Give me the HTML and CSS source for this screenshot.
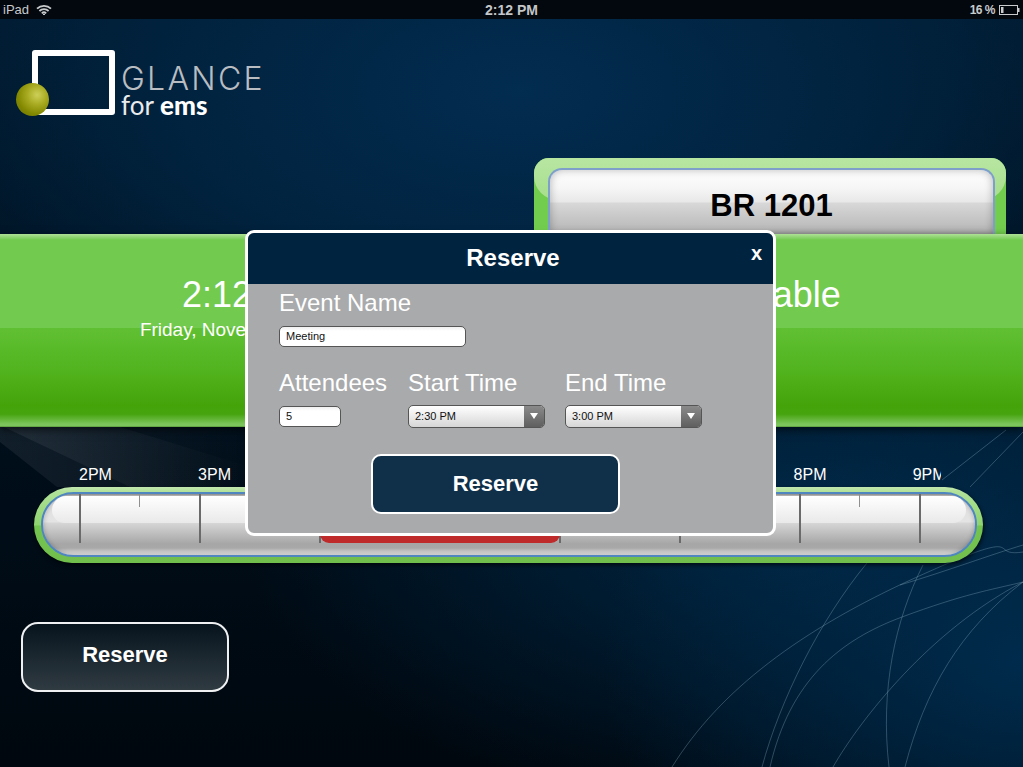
FILE: index.html
```html
<!DOCTYPE html>
<html lang="en">
<head>
<meta charset="utf-8">
<title>Glance for EMS</title>
<link rel="stylesheet" href="styles.css">
</head>
<body>
<div class="page">
  <svg class="bg-art" width="1023" height="767" viewBox="0 0 1023 767" fill="none">
    <defs>
      <linearGradient id="wedge" x1="0" y1="0" x2="1" y2="0">
        <stop offset="0" stop-color="#fff" stop-opacity=".07"/>
        <stop offset="1" stop-color="#fff" stop-opacity="0"/>
      </linearGradient>
      <linearGradient id="wedge2" x1="0" y1="0" x2="1" y2="0">
        <stop offset="0" stop-color="#fff" stop-opacity=".07"/>
        <stop offset="1" stop-color="#fff" stop-opacity="0"/>
      </linearGradient>
    </defs>
    <path d="M0 427H260V487H57L0 442Z" fill="url(#wedge)"/>
    <path d="M4 427H120L260 470V487H130Z" fill="url(#wedge2)"/>
    <g stroke="#8fb2c8" stroke-opacity=".33" stroke-width="1">
      <path d="M672 767C720 690 800 630 917 577S985 558 1023 552"/>
      <path d="M770 767C790 680 840 640 902 617S990 590 1023 582"/>
      <path d="M833 767C860 720 930 630 1023 582"/>
      <path d="M923 565C895 620 880 690 889 767"/>
      <path d="M867 563C820 620 780 700 762 767"/>
      <path d="M905 767C925 690 960 630 1023 582"/>
      <path d="M900 585C950 570 990 555 1023 545"/>
      <path d="M1006 430L942 480"/>
      <path d="M1023 432L970 487"/>
    </g>
  </svg>

  <header class="status">
    <div class="status-left">
      <span>iPad</span>
      <svg class="wifi" width="16" height="12" viewBox="0 0 16 12" fill="none" stroke="#c8cacc" stroke-width="1.8">
        <path d="M1 4.6C5 .9 11 .9 15 4.6"/>
        <path d="M3.4 7C6 4.6 10 4.6 12.6 7"/>
        <path d="M5.8 9.3C7 8.2 9 8.2 10.2 9.3"/>
        <path d="M8 9.8L8 11" stroke-width="2"/>
      </svg>
    </div>
    <div class="status-time">2:12 PM</div>
    <div class="status-right">
      <span>16 %</span>
      <svg width="21" height="10" viewBox="0 0 21 10" fill="none">
        <rect x=".5" y=".5" width="18" height="9" stroke="#c8cacc"/>
        <rect x="2" y="2" width="2.5" height="6" fill="#c8cacc"/>
        <rect x="19" y="3" width="1.5" height="4" fill="#c8cacc"/>
      </svg>
    </div>
  </header>

  <section class="brand">
    <div class="logo-mark">
      <span class="logo-frame"></span>
      <span class="logo-ball"></span>
    </div>
    <div class="logo-text">
      <div class="logo-glance">GLANCE</div>
      <div class="logo-for">for <b>ems</b></div>
    </div>
  </section>

  <div class="room-tab">
    <div class="room-inner">BR 1201</div>
  </div>

  <section class="band">
    <div class="band-col band-left">
      <div class="band-big">2:12 PM</div>
      <div class="band-small">Friday, November 9, 2012</div>
    </div>
    <div class="band-col band-right">
      <div class="band-big">Available</div>
    </div>
  </section>

  <div class="hours">
    <span>2PM</span><span>3PM</span><span>4PM</span><span>5PM</span><span>6PM</span><span>7PM</span><span>8PM</span><span>9PM</span>
  </div>

  <div class="timeline">
    <div class="timeline-inner">
      <div class="timeline-shine"></div>
      <div class="ticks">
        <i class="tick"></i><i class="tick half"></i><i class="tick"></i><i class="tick half"></i>
        <i class="tick"></i><i class="tick half"></i><i class="tick"></i><i class="tick half"></i>
        <i class="tick"></i><i class="tick half"></i><i class="tick"></i><i class="tick half"></i>
        <i class="tick"></i><i class="tick half"></i><i class="tick"></i>
      </div>
      <div class="booking"></div>
    </div>
  </div>

  <button class="btn-reserve" type="button">Reserve</button>

  <div class="modal">
    <div class="modal-head">
      <span class="modal-title">Reserve</span>
      <span class="modal-close">x</span>
    </div>
    <div class="modal-body">
      <div class="field">
        <label class="field-label">Event Name</label>
        <input class="text-input wide" type="text" value="Meeting">
      </div>
      <div class="field-row">
        <div class="field col-a">
          <label class="field-label">Attendees</label>
          <input class="text-input narrow" type="text" value="5">
        </div>
        <div class="field col-b">
          <label class="field-label">Start Time</label>
          <div class="select"><span class="select-value">2:30 PM</span><span class="select-arrow"></span></div>
        </div>
        <div class="field">
          <label class="field-label">End Time</label>
          <div class="select"><span class="select-value">3:00 PM</span><span class="select-arrow"></span></div>
        </div>
      </div>
      <button class="btn-submit" type="button">Reserve</button>
    </div>
  </div>
</div>
</body>
</html>
```
FILE: styles.css
```css
* { box-sizing: border-box; }
html, body { margin: 0; padding: 0; }
body { font-family: "Liberation Sans", Arial, sans-serif; background: #000; }

.page {
  position: relative;
  width: 1023px;
  height: 767px;
  overflow: hidden;
  color: #fff;
  background:
    radial-gradient(ellipse 420px 340px at 1023px 660px, rgba(0, 44, 78, .95), rgba(0, 44, 78, 0) 100%),
    radial-gradient(ellipse 560px 300px at 800px 520px, rgba(0, 42, 74, .9), rgba(0, 42, 74, 0) 100%),
    radial-gradient(ellipse 620px 330px at 520px 90px, #022c50 0%, #01233f 55%, rgba(1, 22, 40, 0) 100%),
    linear-gradient(180deg, #011a30 0%, #000e1a 60%, #00070e 100%);
}
.bg-art { position: absolute; left: 0; top: 0; }

.status {
  position: relative;
  display: flex;
  align-items: center;
  justify-content: space-between;
  height: 19px;
  padding: 0 3px 0 3px;
  background: #02080e;
  color: #c8cacc;
  font-size: 13px;
}
.status-left { display: flex; align-items: center; gap: 7px; }
.status-time { position: absolute; left: 0; right: 0; text-align: center; font-weight: 700; font-size: 14px; color: #c4c6c8; }
.status-right { display: flex; align-items: center; gap: 4px; font-size: 12px; font-weight: 700; letter-spacing: -.5px; }
.wifi { display: block; }

.brand {
  position: relative;
  display: flex;
  height: 139px;
  padding: 31px 0 0 16px;
}
.logo-mark { position: relative; width: 100px; height: 67px; }
.logo-frame {
  display: block;
  margin-left: 16px;
  width: 83px;
  height: 65px;
  border: 6px solid #fff;
  border-radius: 3px;
}
.logo-ball {
  position: absolute;
  left: 0;
  bottom: 1px;
  width: 33px;
  height: 33px;
  border-radius: 50%;
  background: radial-gradient(circle at 64% 36%, #cdd058 0%, #a9ac22 32%, #828800 65%, #6a7000 100%);
}
.logo-text { margin: 14px 0 0 6px; }
.logo-glance {
  font-family: Inter, Lato, sans-serif;
  font-weight: 300;
  font-size: 32px;
  line-height: 29px;
  letter-spacing: 2.3px;
  color: #b9bdc1;
  margin-left: -1px;
}
.logo-for {
  font-family: Lato, "Open Sans", sans-serif;
  font-size: 26px;
  line-height: 24px;
  color: #e9ebed;
  margin-left: -1px;
}
.logo-for b { font-weight: 900; color: #fff; }

.room-tab {
  position: relative;
  margin-left: 534px;
  width: 472px;
  height: 76px;
  padding: 10px 11px 0 14px;
  border-radius: 15px 15px 0 0;
  background: #72cc4e;
}
.room-tab::before {
  content: "";
  position: absolute;
  left: 0;
  right: 0;
  top: 0;
  height: 42px;
  border-radius: 15px 15px 24px 24px;
  background: linear-gradient(180deg, #b8e6a2, #a6de8b);
}
.room-inner {
  position: relative;
  height: 66px;
  border: 2px solid #7f9fcb;
  border-bottom: 0;
  border-radius: 14px 14px 0 0;
  background: linear-gradient(180deg, #fff 0, #f6f6f6 18px, #e8e8e8 32px, #d8d8d8 33px, #b4b4b4 64px);
  box-shadow: inset 0 0 9px rgba(0, 0, 0, .28);
  color: #000;
  font-size: 31px;
  font-weight: 700;
  line-height: 72px;
  text-align: center;
}

.band {
  position: relative;
  display: flex;
  justify-content: space-between;
  height: 193px;
  padding-top: 41px;
  background: linear-gradient(180deg, #aee097 0, #72ca4e 6px, #72ca4e 94px, #60c033 94px, #52b41f 135px, #44a309 172px, #46a40e 180px, #7cc45c 190px, #7cc45c 192px, #4a8a30 193px);
  box-shadow: 0 3px 8px rgba(0, 0, 0, .6);
}
.band-col { width: 496px; text-align: center; }
.band-left { width: 498px; }
.band-right { margin-right: 7px; }
.band-big { font-size: 36px; line-height: 40px; }
.band-small { font-size: 19px; line-height: 22px; margin-top: 4px; }

.hours {
  position: relative;
  display: flex;
  width: 862px;
  margin: 38px 0 0 79px;
  overflow: hidden;
  font-size: 16px;
  line-height: 20px;
}
.hours span { flex: 0 0 119.1px; }

.timeline {
  position: relative;
  width: 949px;
  height: 76px;
  margin: 2px 0 0 34px;
  padding: 5px 6px 6px 7px;
  border-radius: 38px;
  background: linear-gradient(180deg, #c3e8b0 0, #b0e198 5px, #8ed46e 38px, #74c450 39px, #72be4c 100%);
  box-shadow: 1px 2px 4px rgba(0, 0, 0, .7);
}
.timeline-inner {
  position: relative;
  height: 65px;
  border: 2px solid #4f86c0;
  border-radius: 33px;
  overflow: hidden;
  background: linear-gradient(180deg, #9a9a9a 0, #dedede 3px, #e4e4e4 28px, #d6d6d6 29px, #a6a6a6 50px, #a8a8a8 54px, #efefef 62px);
  box-shadow: inset 0 0 5px rgba(0, 0, 0, .25);
}
.timeline-shine {
  position: absolute;
  left: 9px;
  right: 9px;
  top: 2px;
  height: 27px;
  border-radius: 24px 24px 22px 22px;
  background: linear-gradient(180deg, #fff, #e9e9e9);
}
.booking {
  position: absolute;
  left: 277px;
  top: 20px;
  width: 240px;
  height: 29px;
  border-radius: 0 0 9px 9px;
  background: #bf2a2a;
}
.ticks {
  position: relative;
  display: flex;
  align-items: flex-start;
  gap: 58px;
  margin-top: -1px;
  padding-left: 36px;
}
.tick {
  flex: none;
  width: 2px;
  height: 50px;
  background: #6a6a6a;
}
.tick.half { height: 14px; background: #8f8f8f; width: 1px; margin-right: 1px; }

.btn-reserve {
  position: relative;
  display: block;
  width: 208px;
  height: 70px;
  margin: 59px 0 0 21px;
  padding: 0 0 4px 0;
  border: 2px solid #eef0f2;
  border-radius: 17px;
  background: linear-gradient(180deg, #07131d 0%, #1c2830 50%, #2f3a41 100%);
  color: #fff;
  font: 700 22px "Liberation Sans", Arial, sans-serif;
}

.modal {
  position: absolute;
  left: 245px;
  top: 230px;
  width: 531px;
  height: 306px;
  border: 3px solid #fff;
  border-radius: 9px;
  overflow: hidden;
  background: #a9aaac;
}
.modal-head {
  position: relative;
  display: flex;
  align-items: center;
  justify-content: center;
  height: 51px;
  padding: 0 0 2px 5px;
  background: #00233f;
}
.modal-title { font-size: 24px; font-weight: 700; }
.modal-close {
  position: absolute;
  right: 11px;
  top: 9px;
  font-size: 20px;
  font-weight: 700;
}
.modal-body { padding: 5px 0 0 31px; color: #fff; }
.field { display: flex; flex-direction: column; align-items: flex-start; }
.field-label { font-size: 24px; line-height: 28px; }
.text-input {
  height: 21px;
  margin-top: 9px;
  padding: 0 6px 2px;
  border: 1px solid #555;
  border-radius: 5px;
  background: linear-gradient(180deg, #f0f0f0 0, #fff 4px);
  color: #111;
  font: 11px "Liberation Sans", Arial, sans-serif;
}
.text-input.wide { width: 187px; }
.text-input.narrow { width: 62px; }
.field-row { display: flex; margin-top: 22px; }
.col-a { width: 129px; }
.col-b { width: 157px; }
.select {
  display: flex;
  align-items: stretch;
  width: 137px;
  height: 23px;
  margin-top: 8px;
  border: 1px solid #555;
  border-radius: 5px;
  overflow: hidden;
  background: linear-gradient(180deg, #fff 0, #d6d6d6 100%);
  color: #111;
  font-size: 11px;
}
.select-value { flex: 1; padding-left: 6px; line-height: 20px; }
.select-arrow {
  position: relative;
  width: 20px;
  background: linear-gradient(180deg, #8a8a8a 0, #5f5f5f 100%);
}
.select-arrow::after {
  content: "";
  position: absolute;
  left: 6px;
  top: 7px;
  border-left: 4px solid transparent;
  border-right: 4px solid transparent;
  border-top: 6px solid #fff;
}
.btn-submit {
  display: block;
  width: 249px;
  height: 60px;
  margin: 26px 0 0 92px;
  padding: 0;
  border: 2px solid #fff;
  border-radius: 10px;
  background: #10304a;
  color: #fff;
  font: 700 22px "Liberation Sans", Arial, sans-serif;
}
```
